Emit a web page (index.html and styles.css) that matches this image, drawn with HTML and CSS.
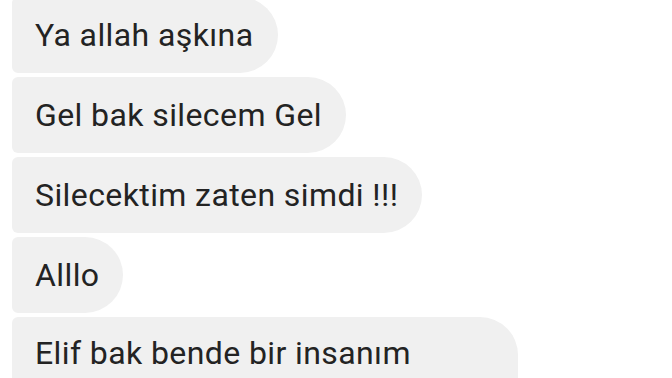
FILE: index.html
```html
<!DOCTYPE html>
<html lang="tr">
<head>
    <meta charset="UTF-8">
    <meta name="viewport" content="width=device-width, initial-scale=1.0">
    <title>Sohbet</title>
    <link rel="stylesheet" href="styles.css">
</head>
<body>
    <div class="chat">
        <div class="bubble">Ya allah aşkına</div>
        <div class="bubble">Gel bak silecem Gel</div>
        <div class="bubble">Silecektim zaten simdi !!!</div>
        <div class="bubble">Alllo</div>
        <div class="bubble bubble-long">Elif bak bende bir insanım</div>
    </div>
</body>
</html>
```

FILE: styles.css
```css
html {
    font-family: Roboto, "Noto Sans", sans-serif;
}

body {
    margin: 0;
    background-color: #fff;
    overflow: hidden;
}

.chat {
    display: flex;
    flex-direction: column;
    align-items: flex-start;
    gap: 4px;
    padding-left: 12px;
    margin-top: -3px;
}

.bubble {
    box-sizing: border-box;
    height: 76px;
    line-height: 76px;
    padding: 0 24px 0 23px;
    background-color: #f0f0f0;
    color: #232323;
    font-size: 32px;
    letter-spacing: 0.4px;
    border-radius: 6px 38px 38px 6px;
    white-space: nowrap;
}

/* last message is cut off by the bottom of the screen */
.bubble-long {
    width: 506px;
    height: 61px;
    line-height: 49px;
    padding-top: 12px;
    overflow: hidden;
    border-radius: 6px 38px 0 0;
}
```
